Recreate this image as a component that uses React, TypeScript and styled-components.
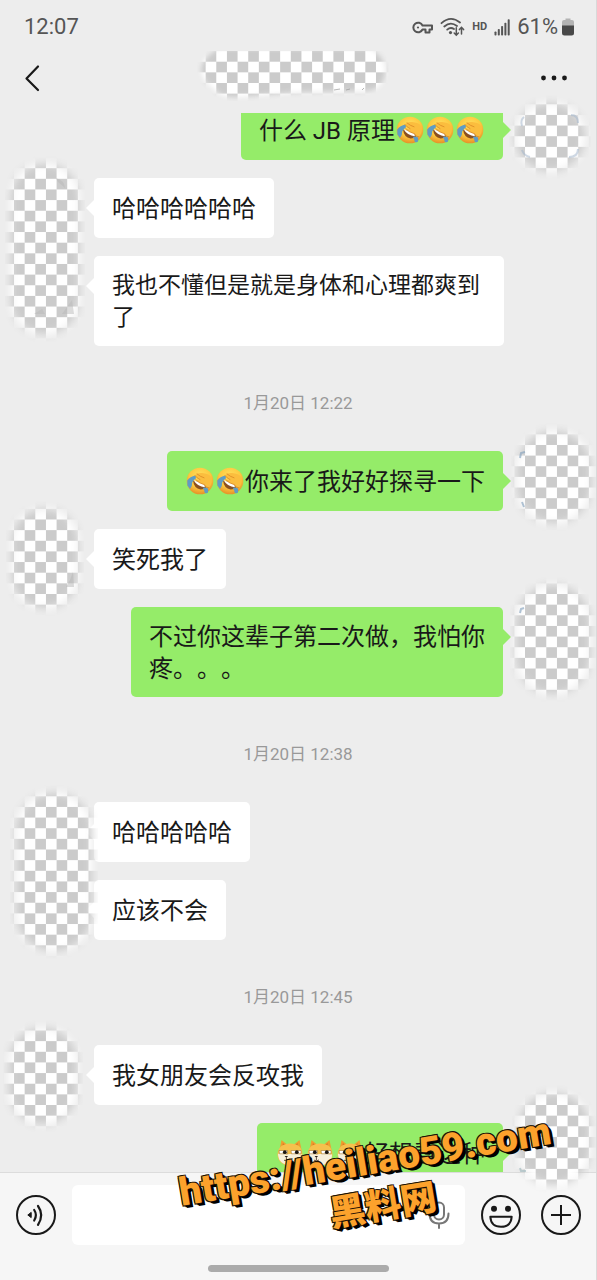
import React from "react";
import styled, { createGlobalStyle, css } from "styled-components";

const GlobalStyle = createGlobalStyle`
  * { box-sizing: border-box; }
  body { margin: 0; background: #ededed; }
  button, input { font: inherit; margin: 0; padding: 0; border: 0; background: none; color: inherit; }
`;

const Screen = styled.div`
  position: relative;
  display: flex;
  flex-direction: column;
  height: 100vh;
  overflow: hidden;
  background: #ededed;
  border-right: 1px solid #d9d9d9;
  color: #191919;
  font-family: Roboto, "Noto Sans CJK SC", sans-serif;
`;

const StatusBar = styled.div`
  display: flex;
  align-items: center;
  justify-content: space-between;
  height: 54px;
  padding: 0 22px 0 24px;
  font-size: 22px;
  line-height: 26px;
  color: #555;
`;

const StatusIcons = styled.div`
  display: flex;
  align-items: center;
  gap: 7px;
`;

const HdLabel = styled.span`
  font-size: 11px;
  line-height: 12px;
  font-weight: 700;
`;

const Battery = styled.span`
  display: flex;
  align-items: center;
  gap: 4px;
`;

const TitleBar = styled.header`
  display: flex;
  align-items: center;
  justify-content: space-between;
  height: 59px;
  padding: 0 28px 12px 20px;
`;

const IconButton = styled.button`
  display: flex;
  align-items: center;
  justify-content: center;
  cursor: pointer;
`;

const Chat = styled.main`
  flex: 1;
  min-height: 0;
  overflow: hidden;
`;

const MessageList = styled.div`
  display: flex;
  flex-direction: column;
  gap: 18px;
  margin-top: -13px;
`;

const Row = styled.div<{ $mine?: boolean }>`
  display: flex;
  flex-direction: ${(p) => (p.$mine ? "row-reverse" : "row")};
  gap: 16px;
  padding: 0 ${(p) => (p.$mine ? 17 : 18)}px 0 18px;
`;

const Avatar = styled.div`
  flex: none;
  width: 60px;
  height: 60px;
`;

const Bubble = styled.div<{ $mine?: boolean; $dense?: boolean }>`
  position: relative;
  display: flex;
  align-items: center;
  max-width: 410px;
  min-height: 60px;
  padding: 14px 18px 12px;
  border-radius: 5px;
  background: ${(p) => (p.$mine ? "#95ec69" : "#fff")};
  font-size: ${(p) => (p.$dense ? 23 : 24)}px;
  line-height: 32px;
  text-spacing-trim: space-all;

  &::after {
    content: "";
    position: absolute;
    top: 22px;
    border: 8px solid transparent;
    ${(p) =>
      p.$mine
        ? css`
            left: 100%;
            border-right-width: 0;
            border-left-color: #95ec69;
          `
        : css`
            right: 100%;
            border-left-width: 0;
            border-right-color: #fff;
          `}
  }
`;

const Emoji = styled.svg`
  width: 28px;
  height: 28px;
  margin: 0 1px;
  vertical-align: -5px;
`;

const TimeStamp = styled.time`
  display: block;
  padding: 29px 0 20px;
  text-align: center;
  font-size: 17px;
  line-height: 20px;
  color: #999;
`;

const InputBar = styled.footer`
  position: relative;
  display: flex;
  flex-direction: column;
  align-items: center;
  gap: 20px;
  padding: 12px 15px 8px 16px;
  background: #f6f6f6;
  border-top: 1px solid #dcdcdc;
`;

const Tools = styled.div`
  display: flex;
  align-items: center;
  gap: 16px;
  width: 100%;
`;

const ToolGroup = styled.div`
  display: flex;
  gap: 20px;
`;

const Field = styled.div`
  display: flex;
  flex: 1;
  align-items: center;
  min-width: 0;
  height: 60px;
  padding: 0 14px;
  border-radius: 6px;
  background: #fff;
`;

const TextInput = styled.input`
  flex: 1;
  min-width: 0;
  height: 40px;
  font-size: 24px;
  outline: none;
`;

const HomeIndicator = styled.div`
  width: 32%;
  height: 7px;
  border-radius: 4px;
  background: #ababab;
`;

const PatchSvg = styled.svg<{ $x: number; $y: number; $right?: boolean }>`
  position: absolute;
  top: ${(p) => p.$y}px;
  ${(p) => (p.$right ? `right: ${p.$x}px;` : `left: ${p.$x}px;`)}
  pointer-events: none;
`;

const TitlePatch = styled.div`
  position: absolute;
  top: 51px;
  left: 0;
  right: 0;
  display: flex;
  justify-content: center;
  padding-right: 11px;
  pointer-events: none;
`;

const Watermark = styled.div<{ $second?: boolean }>`
  position: absolute;
  left: ${(p) => (p.$second ? 329 : 177)}px;
  bottom: ${(p) => (p.$second ? 52 : 96)}px;
  transform: rotate(-9.5deg);
  white-space: nowrap;
  pointer-events: none;
  font-family: Roboto, "Noto Sans CJK SC", sans-serif;
  font-size: ${(p) => (p.$second ? 36 : 39)}px;
  line-height: 44px;
  font-weight: 900;
  color: #fca22c;
  text-shadow: -1px -1px 0 #1a1206, 1px -1px 0 #1a1206, -1px 1px 0 #1a1206, 1px 1px 0 #000, 2px 2px 0 #000,
    3px 3px 0 #000;
`;

const CELL = 10.646;

const Checker = ({ id }: { id: string }) => (
  <pattern id={id} patternUnits="userSpaceOnUse" x={14} y={61.7} width={CELL * 2} height={CELL * 2}>
    <rect width={CELL * 2} height={CELL * 2} fill="#fff" />
    <rect x={CELL} width={CELL} height={CELL} fill="#cbcbcb" />
    <rect y={CELL} width={CELL} height={CELL} fill="#cbcbcb" />
  </pattern>
);

type PatchProps = {
  id: string;
  x: number;
  y: number;
  w: number;
  h: number;
  right?: number;
  traces?: React.ReactNode;
};

const Patch = ({ id, x, y, w, h, right, traces }: PatchProps) => (
  <PatchSvg
    $x={right ?? x}
    $y={y}
    $right={right !== undefined}
    width={w}
    height={h}
    viewBox={`${x} ${y} ${w} ${h}`}
    aria-hidden="true"
  >
    <defs>
      <Checker id={`${id}-c`} />
      <filter id={`${id}-f`} x="-20%" y="-20%" width="140%" height="140%" colorInterpolationFilters="sRGB">
        <feGaussianBlur stdDeviation="4" />
      </filter>
      <mask id={`${id}-m`} maskUnits="userSpaceOnUse" x={x} y={y} width={w} height={h}>
        <rect x={x + 6} y={y + 8} width={w - 12} height={h - 16} rx={(w - 12) / 2} fill="#fff" filter={`url(#${id}-f)`} />
      </mask>
    </defs>
    <rect x={x} y={y} width={w} height={h} fill={`url(#${id}-c)`} mask={`url(#${id}-m)`} />
    {traces}
  </PatchSvg>
);

const HeaderPatch = () => (
  <TitlePatch>
    <svg width="192" height="50" viewBox="197 51 192 50" aria-hidden="true">
      <defs>
        <Checker id="title-c" />
        <filter id="title-f" x="-10%" y="-20%" width="120%" height="140%" colorInterpolationFilters="sRGB">
          <feGaussianBlur stdDeviation="2.8" />
        </filter>
        <mask id="title-m" maskUnits="userSpaceOnUse" x="197" y="51" width="192" height="50">
          <path
            d="M220 48H368Q386 56 385 72Q384 88 368 91L300 92L240 97Q222 99 213 88Q201 80 201 68Q204 56 220 48Z"
            fill="#fff"
            filter="url(#title-f)"
          />
        </mask>
      </defs>
      <rect x="197" y="51" width="192" height="50" fill="url(#title-c)" mask="url(#title-m)" />
      <path d="M334 90l6-1M346 90l4-1M362 90l2-2" stroke="#999" strokeWidth="1" opacity="0.7" />
    </svg>
  </TitlePatch>
);

const Facepalm = () => (
  <Emoji viewBox="0 0 28 28" role="img" aria-label="捂脸">
    <defs>
      <radialGradient id="face" cx="0.5" cy="0.35" r="0.66">
        <stop offset="0" stopColor="#ffe262" />
        <stop offset="0.6" stopColor="#fdc93f" />
        <stop offset="1" stopColor="#e58f26" />
      </radialGradient>
    </defs>
    <circle cx="14" cy="14" r="13.3" fill="url(#face)" />
    <path d="M7 13.5Q8 21.5 14.5 22.5Q18.5 22.6 20 20.5L19 16.5Z" fill="#8a4f20" />
    <path d="M7.6 13.2L18.6 17.6L18.8 20.2Q11.5 19.6 7.6 13.2Z" fill="#fff" />
    <path d="M9.5 8.5Q4 9.6 1.2 13.5L1.4 18.4L4 22Q6.4 19.5 6.2 15.6Q7.2 12.8 10 11.2Z" fill="#5f9cc4" />
    <path d="M16.5 20.8L21.3 20.6Q23 23.5 22 25.4Q19.8 27.2 18.6 25.6Q18.6 22.8 16.5 20.8Z" fill="#5f9cc4" />
    <path
      d="M9 8.6Q10.5 5.6 16 6Q22.5 6.4 25.6 10.4Q26.8 16.6 22.6 20.8Q19.4 20.8 18.6 17.8Q13 16.4 9.6 12.6Q12 12.8 14 12.6Q10.4 11 9 8.6Z"
      fill="#fbbd3e"
    />
    <path
      d="M9 8.6Q10.4 11 14 12.6M11 6.9Q14 9.6 18 10.8M9.6 12.6Q13 16.4 18.6 17.8Q19.4 20.8 22.6 20.8"
      fill="none"
      stroke="#d98824"
      strokeWidth="0.8"
      strokeLinecap="round"
    />
  </Emoji>
);

const Doge = () => (
  <Emoji viewBox="0 0 28 28" role="img" aria-label="旺柴">
    <path d="M3.5 11L5.5 1L11 5.5H18L23.5 1L25.5 11Z" fill="#ee9f2e" />
    <path d="M6.4 7.5L6.9 4L9.5 6.2M21.8 7.5L21.6 4L19.2 6.2" fill="#d7772a" />
    <path d="M14 4.5Q26.5 5 26.5 15.5Q26 26 14 26.5Q2 26 1.5 15.5Q2 5 14 4.5Z" fill="#f6c04d" />
    <path d="M2 15Q6 13 10.5 15.5Q17 14 26 15.5Q26 25.5 14 26.2Q2.5 25.5 2 15Z" fill="#f7f0dc" />
    <path d="M3 11.5H11.5V14.8H3.5ZM15 11.5H25V14.8H15.5Z" fill="#fff" stroke="#a3752c" strokeWidth="0.6" />
    <circle cx="8.8" cy="13.2" r="1.9" fill="#1c1712" />
    <circle cx="20.8" cy="13.2" r="1.9" fill="#1c1712" />
    <path d="M8.6 17H12L10.4 19Z" fill="#2b2018" />
    <path d="M10.4 19V21.4M8 21.2Q10.4 22.6 13 21" fill="none" stroke="#54402c" strokeWidth="0.9" />
  </Emoji>
);

const KeyIcon = () => (
  <svg width="21" height="13" viewBox="0 0 21 13" fill="none" stroke="#555" strokeWidth="2" aria-hidden="true">
    <path d="M10.5 4.5A4.8 4.8 0 1 0 10.5 8.5H13.5V11.5H17.5V8.5H20V4.5Z" strokeLinejoin="round" />
    <circle cx="6" cy="6.5" r="1.1" fill="#555" stroke="none" />
  </svg>
);

const WifiIcon = () => (
  <svg width="25" height="20" viewBox="0 0 25 20" fill="none" stroke="#555" strokeWidth="1.8" strokeLinecap="round" aria-hidden="true">
    <path d="M1.5 6.2Q10.5 -2 20 5.5M4.3 9.5Q10.5 4 17 9M7.2 12.6Q10.5 9.8 14 12" />
    <circle cx="10.5" cy="15.6" r="1.6" fill="#555" stroke="none" />
    <path d="M16.3 10.8V18M14.2 16L16.3 18.2L18.4 16M21.5 17V10.5M19.4 12.6L21.5 10.4L23.6 12.6" strokeWidth="1.5" />
  </svg>
);

const SignalIcon = () => (
  <svg width="16" height="17" viewBox="0 0 16 17" fill="#555" aria-hidden="true">
    <rect x="0.5" y="12.5" width="2" height="4" rx="0.8" />
    <rect x="3.8" y="10" width="2" height="6.5" rx="0.8" />
    <rect x="7.1" y="7" width="2" height="9.5" rx="0.8" />
    <rect x="10.4" y="3.8" width="2" height="12.7" rx="0.8" />
    <rect x="13.7" y="0.3" width="2" height="16.2" rx="0.8" />
  </svg>
);

const BatteryIcon = () => (
  <svg width="12" height="18" viewBox="0 0 12 18" aria-hidden="true">
    <path d="M3.5 0.5H8.5V2H10Q12 2 12 4V8H0V4Q0 2 2 2H3.5Z" fill="#b3b3b3" />
    <path d="M0 7.5H12V15Q12 17.5 9.5 17.5H2.5Q0 17.5 0 15Z" fill="#484848" />
  </svg>
);

const VoiceIcon = () => (
  <svg width="40" height="40" viewBox="0 0 40 40" fill="none" stroke="#191919" strokeWidth="2" aria-hidden="true">
    <circle cx="20" cy="20" r="19" />
    <path d="M11.8 20L15.2 17.4V22.6Z" fill="#191919" strokeWidth="1" strokeLinejoin="round" />
    <path d="M18.2 15Q21.6 20 18.2 25.5M22 11Q28.4 20 22 29.8" strokeWidth="2.2" strokeLinecap="round" />
  </svg>
);

const SmileIcon = () => (
  <svg width="40" height="40" viewBox="0 0 40 40" fill="none" stroke="#191919" strokeWidth="2" aria-hidden="true">
    <circle cx="20" cy="20" r="19" />
    <circle cx="13" cy="13.7" r="3" fill="#191919" stroke="none" />
    <circle cx="27" cy="13.7" r="3" fill="#191919" stroke="none" />
    <path d="M9.3 21.7H30.7Q30 31.8 20 31.8Q10 31.8 9.3 21.7Z" strokeLinejoin="round" />
  </svg>
);

const PlusIcon = () => (
  <svg width="40" height="40" viewBox="0 0 40 40" fill="none" stroke="#191919" strokeWidth="2" aria-hidden="true">
    <circle cx="20" cy="20" r="19" />
    <path d="M20 10V30M10 20H30" />
  </svg>
);

const MicIcon = () => (
  <svg width="24" height="28" viewBox="0 0 24 28" fill="none" stroke="#777" strokeWidth="2" aria-hidden="true">
    <rect x="7" y="1.5" width="10" height="17" rx="5" />
    <path d="M2.5 12.5Q2.5 22.5 12 22.5Q21.5 22.5 21.5 12.5M12 22.5V27" strokeLinecap="round" />
  </svg>
);

type MessageProps = { mine?: boolean; dense?: boolean; children: React.ReactNode };

const Message = ({ mine, dense, children }: MessageProps) => (
  <Row $mine={mine}>
    <Avatar />
    <Bubble $mine={mine} $dense={dense}>
      <span>{children}</span>
    </Bubble>
  </Row>
);

export default function App() {
  return (
    <Screen>
      <GlobalStyle />
      <StatusBar>
        <span>12:07</span>
        <StatusIcons>
          <KeyIcon />
          <WifiIcon />
          <HdLabel>HD</HdLabel>
          <SignalIcon />
          <Battery>
            61%
            <BatteryIcon />
          </Battery>
        </StatusIcons>
      </StatusBar>
      <TitleBar>
        <IconButton aria-label="返回">
          <svg width="24" height="28" viewBox="0 0 24 28" fill="none" stroke="#191919" strokeWidth="2.2" strokeLinecap="round" strokeLinejoin="round" aria-hidden="true">
            <path d="M18 2.5L6.5 14.5L18 26" />
          </svg>
        </IconButton>
        <IconButton aria-label="更多">
          <svg width="28" height="8" viewBox="0 0 28 8" fill="#191919" aria-hidden="true">
            <circle cx="3.5" cy="4" r="2.4" />
            <circle cx="14" cy="4" r="2.4" />
            <circle cx="24.5" cy="4" r="2.4" />
          </svg>
        </IconButton>
      </TitleBar>

      <Chat>
        <MessageList>
          <Message mine>
            什么 JB 原理
            <Facepalm />
            <Facepalm />
            <Facepalm />
          </Message>
          <Message>哈哈哈哈哈哈</Message>
          <Message dense>我也不懂但是就是身体和心理都爽到了</Message>
          <TimeStamp>1月20日 12:22</TimeStamp>
          <Message mine>
            <Facepalm />
            <Facepalm />
            你来了我好好探寻一下
          </Message>
          <Message>笑死我了</Message>
          <Message mine>
            不过你这辈子第二次做，我怕你
            <br />
            疼。。。
          </Message>
          <TimeStamp>1月20日 12:38</TimeStamp>
          <Message>哈哈哈哈哈</Message>
          <Message>应该不会</Message>
          <TimeStamp>1月20日 12:45</TimeStamp>
          <Message>我女朋友会反攻我</Message>
          <Message mine>
            <Doge />
            <Doge />
            <Doge />
            好想看这种
          </Message>
        </MessageList>
      </Chat>

      <InputBar>
        <Tools>
          <IconButton aria-label="语音">
            <VoiceIcon />
          </IconButton>
          <Field>
            <TextInput aria-label="消息" />
            <IconButton aria-label="语音输入">
              <MicIcon />
            </IconButton>
          </Field>
          <ToolGroup>
            <IconButton aria-label="表情">
              <SmileIcon />
            </IconButton>
            <IconButton aria-label="添加">
              <PlusIcon />
            </IconButton>
          </ToolGroup>
        </Tools>
        <HomeIndicator />
      </InputBar>

      <HeaderPatch />
      <Patch
        id="r1"
        x={509}
        y={95}
        w={82}
        h={84}
        right={5}
        traces={
          <path d="M571 115Q578 115 578 123M578 149Q578 157 569 157M524 117Q520 120 522 126M522 150Q524 156 530 157" fill="none" stroke="#9fb4cc" strokeWidth="2" opacity="0.5" />
        }
      />
      <Patch
        id="l1"
        x={5}
        y={156}
        w={80}
        h={186}
        traces={<path d="M56 178Q64 180 65 188L58 182ZM34 314L42 309L45 314ZM62 314L72 300L74 314Z" fill="#b9b9b9" opacity="0.5" />}
      />
      <Patch
        id="r2"
        x={511}
        y={423}
        w={86}
        h={108}
        right={-1}
        traces={<path d="M520 458L521 453L525 452M522 502L524 507" fill="none" stroke="#7d9dbb" strokeWidth="2" opacity="0.6" />}
      />
      <Patch
        id="l2"
        x={6}
        y={501}
        w={78}
        h={115}
        traces={<path d="M66 587L70 580L73 572L74 587Z" fill="#b5b5b5" opacity="0.5" />}
      />
      <Patch
        id="r3"
        x={510}
        y={577}
        w={86}
        h={125}
        right={0}
        traces={<path d="M520 613L521 609L524 608" fill="none" stroke="#7d9dbb" strokeWidth="2" opacity="0.6" />}
      />
      <Patch id="l3" x={10} y={785} w={88} h={174} />
      <Patch id="l4" x={3} y={1020} w={80} h={112} />
      <Patch
        id="r4"
        x={512}
        y={1085}
        w={84}
        h={108}
        right={0}
        traces={<path d="M520 1168L521 1171L526 1171" fill="none" stroke="#9bb5ba" strokeWidth="2" opacity="0.6" />}
      />
      <Watermark>https://heiliao59.com</Watermark>
      <Watermark $second>黑料网</Watermark>
    </Screen>
  );
}
